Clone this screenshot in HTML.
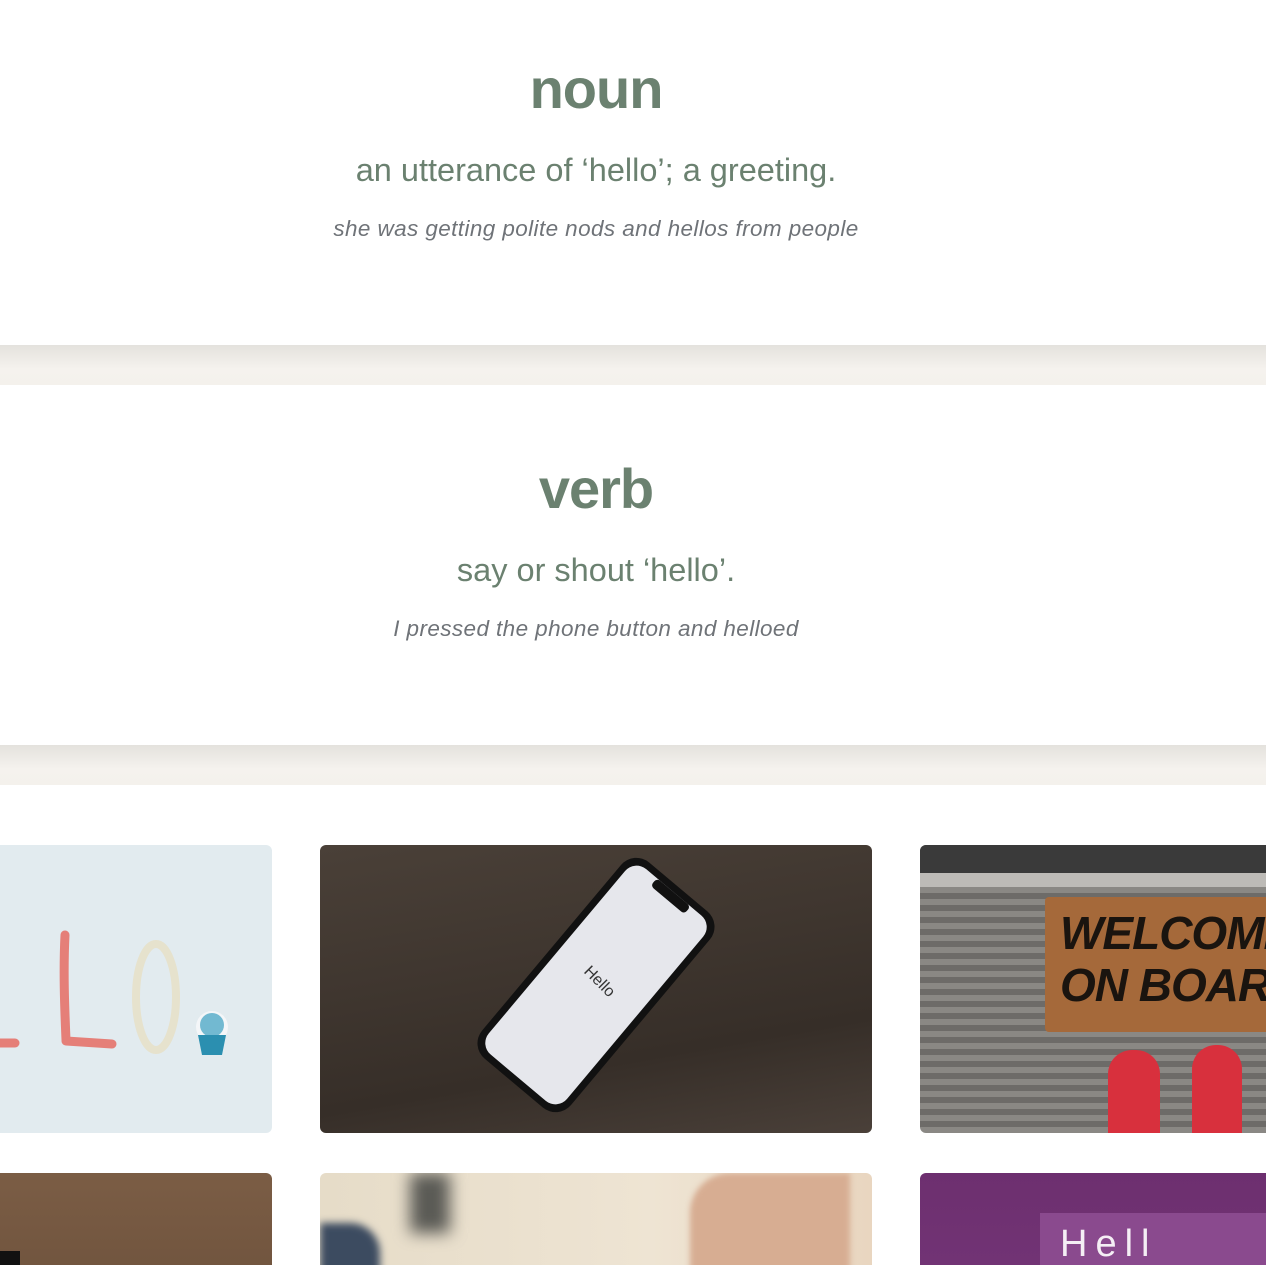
<!DOCTYPE html>
<html><head><meta charset="utf-8"><style>
html,body{margin:0;padding:0;background:#fff;overflow:hidden;width:1266px;height:1265px}
body{font-family:"Liberation Sans",sans-serif;position:relative}
.c{position:absolute;left:0;width:1192px;text-align:center}
h2{margin:0;font-size:56px;font-weight:bold;color:#6b8170;letter-spacing:-1px}
.d{font-size:32.5px;color:#6b8170}
.e{font-size:22.5px;font-style:italic;color:#6f7378;letter-spacing:.4px}
.band{position:absolute;left:0;width:1266px;height:40px;background:linear-gradient(#e4e2dd,#f5f2ee 60%,#f4f1ec)}
.card{position:absolute;width:552px;height:288px;border-radius:6px;overflow:hidden}
</style></head><body>
<div class="c" style="top:56px"><h2>noun</h2></div>
<div class="c d" style="top:152px">an utterance of ‘hello’; a greeting.</div>
<div class="c e" style="top:216px">she was getting polite nods and hellos from people</div>
<div class="band" style="top:345px"></div>
<div class="c" style="top:456px"><h2>verb</h2></div>
<div class="c d" style="top:552px">say or shout ‘hello’.</div>
<div class="c e" style="top:616px">I pressed the phone button and helloed</div>
<div class="band" style="top:745px"></div>

<div class="card" style="left:-280px;top:845px;background:#e2ebef">
<svg width="552" height="288"><path d="M345 90 C343 130 345 170 346 195" stroke="#e57f78" stroke-width="9" fill="none" stroke-linecap="round"/><path d="M346 196 L392 199" stroke="#e57f78" stroke-width="9" stroke-linecap="round"/><path d="M280 198 L295 198" stroke="#e57f78" stroke-width="9" stroke-linecap="round"/><ellipse cx="436" cy="152" rx="20" ry="53" fill="none" stroke="#e6e2cd" stroke-width="8"/><circle cx="492" cy="182" r="16" fill="#f4f6f8"/><circle cx="492" cy="180" r="12" fill="#3aa0c0" opacity=".7"/><path d="M478 190 L506 190 L502 210 L482 210Z" fill="#2b8fb0"/></svg></div>

<div class="card" style="left:320px;top:845px;background:linear-gradient(170deg,#4a4038,#3f362f 40%,#362e28 70%,#4a4039)">
<svg width="552" height="288"><g transform="translate(276,140) rotate(40)"><rect x="-58" y="-128" width="116" height="256" rx="20" fill="#111"/><rect x="-51" y="-121" width="102" height="242" rx="15" fill="#e6e7ec"/><rect x="-22" y="-121" width="44" height="10" rx="4" fill="#111"/><text x="0" y="0" text-anchor="middle" font-size="16" fill="#333" transform="rotate(5)" font-family="Liberation Sans">Hello</text></g></svg></div>

<div class="card" style="left:920px;top:845px;background:repeating-linear-gradient(#6d6b68 0 6px,#8a8884 6px 12px)">
<div style="position:absolute;left:0;top:0;width:552px;height:28px;background:#3a3a3a"></div>
<div style="position:absolute;left:0;top:28px;width:552px;height:14px;background:#bdbbb7"></div>
<div style="position:absolute;left:125px;top:52px;width:440px;height:135px;background:#a5693a;border-radius:4px"></div>
<div style="position:absolute;left:140px;top:62px;font:bold italic 46px 'Liberation Sans',sans-serif;color:#1a140f;line-height:52px;letter-spacing:-1px">WELCOME<br>ON BOARD</div>
<div style="position:absolute;left:188px;top:205px;width:52px;height:90px;background:#d8303d;border-radius:24px 24px 0 0"></div>
<div style="position:absolute;left:272px;top:200px;width:50px;height:95px;background:#d8303d;border-radius:24px 24px 0 0"></div>
</div>

<div class="card" style="left:-280px;top:1173px;background:linear-gradient(180deg,#7b5d45,#5e4532)"><div style="position:absolute;left:280px;top:78px;width:20px;height:20px;background:#111"></div></div>
<div class="card" style="left:320px;top:1173px;background:linear-gradient(90deg,#e6dcc8,#eee4d3 60%,#e9d6c0)">
<div style="position:absolute;left:0;top:50px;width:60px;height:60px;background:#3c4b60;border-radius:0 30px 0 0;filter:blur(4px)"></div>
<div style="position:absolute;left:90px;top:0;width:40px;height:60px;background:#5a5a55;filter:blur(8px)"></div>
<div style="position:absolute;left:370px;top:0;width:160px;height:100px;background:#d7ad92;border-radius:40px 0 0 0;filter:blur(3px)"></div></div>
<div class="card" style="left:920px;top:1173px;background:linear-gradient(180deg,#6d2f6f,#7a3c80)">
<div style="position:absolute;left:120px;top:40px;width:430px;height:60px;background:#8a4a8e"></div>
<div style="position:absolute;left:140px;top:50px;font:38px 'Liberation Sans',sans-serif;color:#f5eef5;letter-spacing:8px">Hell</div></div>
</body></html>
